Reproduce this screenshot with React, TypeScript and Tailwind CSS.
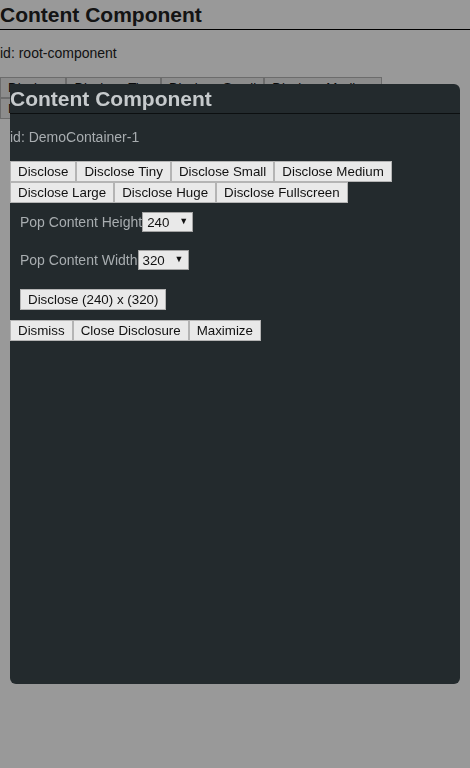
import React, { useState } from 'react'

// Demo disclosure page: root component with a disclosed container on top.

const sizeButtons = [
  'Disclose',
  'Disclose Tiny',
  'Disclose Small',
  'Disclose Medium',
  'Disclose Large',
  'Disclose Huge',
  'Disclose Fullscreen',
]

const heights = ['120', '240', '360', '480']
const widths = ['160', '320', '480']

const Btn: React.FC<{ children: React.ReactNode; onClick?: () => void }> = ({ children, onClick }) => (
  <button
    onClick={onClick}
    className="px-[7px] py-[2px] border border-[#b4b4b4] bg-[#e9e9e9] text-[13.333px] leading-[15px] text-[#111] whitespace-nowrap"
  >
    {children}
  </button>
)

const Picker: React.FC<{ value: string; options: string[]; onChange: (v: string) => void }> = ({
  value,
  options,
  onChange,
}) => (
  <span className="relative inline-flex">
    <select
      value={value}
      onChange={(e) => onChange(e.target.value)}
      className="appearance-none w-[51px] h-[20px] pl-[4px] border border-[#a3a3a3] bg-[#e9e9e9] text-[13.333px] leading-[15px] text-[#111]"
    >
      {options.map((o) => (
        <option key={o} value={o}>{o}</option>
      ))}
    </select>
    <span className="pointer-events-none absolute right-[5px] top-[3px] text-[9px] leading-[12px] text-[#111]">▼</span>
  </span>
)

const Panel: React.FC<{ id: string; dark?: boolean }> = ({ id, dark }) => {
  const [h, setH] = useState('240')
  const [w, setW] = useState('320')

  return (
    <div>
      <h1
        className={
          dark
            ? 'pt-[3px] pb-[2px] text-[21px] leading-[24px] font-bold border-b border-[#0c0f10] text-[#c6cacc]'
            : 'pt-[3px] pb-[2px] text-[21px] leading-[24px] font-bold border-b border-black text-[#222]'
        }
      >
        Content Component
      </h1>
      <p className={dark ? 'mt-[15px] text-[14px] leading-4 text-[#a8adb0]' : 'mt-[15px] text-[14px] leading-4 text-[#222]'}>
        id: {id}
      </p>
      <div className="mt-[16px] flex flex-wrap">
        {sizeButtons.map((b) => (
          <Btn key={b}>{b}</Btn>
        ))}
      </div>
      {dark && (
        <>
          <div className="px-[10px] pt-[9px] pb-[10px] flex flex-col">
            <div className="flex items-center text-[14px] leading-4 text-[#a8adb0]">
              Pop Content Height
              <Picker value={h} options={heights} onChange={setH} />
            </div>
            <div className="mt-[18px] flex items-center text-[14px] leading-4 text-[#a8adb0]">
              Pop Content Width
              <Picker value={w} options={widths} onChange={setW} />
            </div>
            <div className="mt-[19px] flex">
              <Btn>
                Disclose ({h}) x ({w})
              </Btn>
            </div>
          </div>
          <div className="flex">
            <Btn>Dismiss</Btn>
            <Btn>Close Disclosure</Btn>
            <Btn>Maximize</Btn>
          </div>
        </>
      )}
    </div>
  )
}

export default function App() {
  return (
    <div className="relative w-[470px] h-[768px] bg-white overflow-hidden font-['Liberation_Sans',Arial,sans-serif]">
      <Panel id="root-component" />

      {/* Overlay + disclosed container */}
      <div className="fixed inset-0 bg-black/40 flex items-center justify-center">
        <div className="w-[450px] h-[600px] bg-[#232a2d] rounded-md rounded-tl-none overflow-hidden">
          <Panel id="DemoContainer-1" dark />
        </div>
      </div>
    </div>
  )
}
